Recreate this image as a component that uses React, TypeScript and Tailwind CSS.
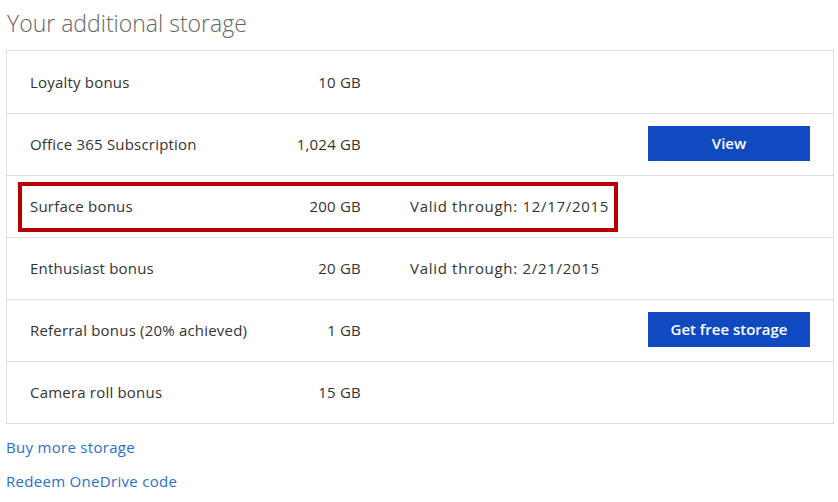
const rows = [
  { name: "Loyalty bonus", size: "10 GB", note: "", action: "" },
  { name: "Office 365 Subscription", size: "1,024 GB", note: "", action: "View" },
  { name: "Surface bonus", size: "200 GB", note: "Valid through: 12/17/2015", action: "", highlight: true },
  { name: "Enthusiast bonus", size: "20 GB", note: "Valid through: 2/21/2015", action: "" },
  { name: "Referral bonus (20% achieved)", size: "1 GB", note: "", action: "Get free storage" },
  { name: "Camera roll bonus", size: "15 GB", note: "", action: "" },
];

const App = () => {
  return (
    <div className="w-[838px] h-[502px] bg-white font-['Open_Sans',sans-serif] text-[#333]">
      <h1 className="pl-[7px] pt-[6px] h-[50px] text-[23px] font-light text-[#666] leading-[34px]">
        Your additional storage
      </h1>
      <div className="mx-[6px] w-[828px] border border-[#dedede]">
        {rows.map((row, index) => (
          <div
            key={index}
            className={`h-[62px] flex items-center ${index > 0 ? "border-t border-[#dedede]" : ""}`}
          >
            {/* highlighted row gets the red outline, others keep the same box size */}
            <div
              className={`flex items-center ml-[11px] w-[600px] h-[50px] text-[15px] tracking-[0.2px] whitespace-nowrap ${
                row.highlight ? "border-[4px] border-[#b80000]" : "border-[4px] border-transparent"
              }`}
            >
              <div className="w-[240px] pl-[8px]">{row.name}</div>
              <div className="w-[99px] text-right">{row.size}</div>
              <div className="pl-[49px] tracking-[0.7px]">{row.note}</div>
            </div>
            <div className="flex-1 flex justify-end pr-[23px] pb-[3px]">
              {row.action && (
                <button
                  type="button"
                  className="w-[162px] h-[35px] bg-[#1149c0] text-white text-[15px] font-semibold"
                >
                  {row.action}
                </button>
              )}
            </div>
          </div>
        ))}
      </div>
      <div className="pl-[6px] pt-[12px] text-[15px] tracking-[0.3px] text-[#2b6fc8]">
        <div className="h-[34px] leading-[22px]">Buy more storage</div>
        <div className="leading-[22px]">Redeem OneDrive code</div>
      </div>
    </div>
  );
};

export default App;
